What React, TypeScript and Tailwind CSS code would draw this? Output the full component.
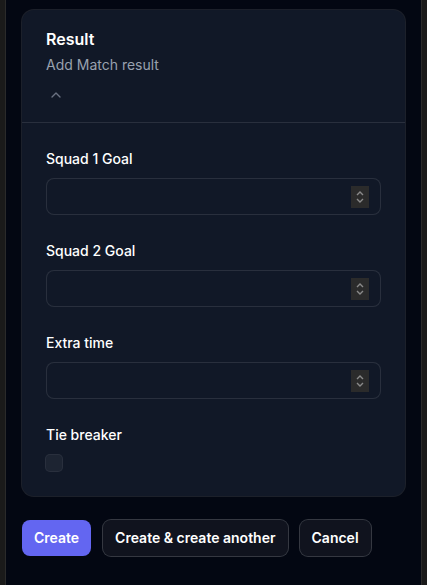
import { ChevronUp } from "lucide-react";

type FieldProps = {
    label: string
}

const NumberField = ({ label }: FieldProps) => {
    return (
        <div className="flex flex-col">
            <label className="text-sm leading-5 font-medium text-white mb-[9px]">{label}</label>
            <div className="h-[37px] rounded-lg ring-1 ring-white/10 ring-inset flex items-center justify-end pr-3">
                <div className="w-[18px] h-[22px] bg-[#2b2b2b] flex flex-col items-center justify-center">
                    <svg width="10" height="16" viewBox="0 0 10 16" fill="none" stroke="#8a8a8a" strokeWidth="1.4">
                        <path d="M2 6 L5 3 L8 6" />
                        <path d="M2 10 L5 13 L8 10" />
                    </svg>
                </div>
            </div>
        </div>
    );
}

const App = () => {
    return (
        <div className="min-h-[585px] w-full flex bg-[#030712]" style={{ fontFamily: "Inter, 'Liberation Sans', sans-serif" }}>
            <div className="w-[6px] bg-[#1a1a1a] border-r border-[#2a2a2a]" />
            <main className="flex-1 pt-[10px] px-[16px]">
                <section className="rounded-xl bg-[#111827] ring-1 ring-white/10">
                    <header className="px-6 pt-[17px] pb-[17px]">
                        <h2 className="text-base leading-6 font-semibold text-white">Result</h2>
                        <p className="mt-1 text-sm leading-5 text-gray-400">Add Match result</p>
                        <button className="mt-[10px] size-5 flex items-center justify-center text-gray-500">
                            <ChevronUp className="size-4" strokeWidth={2} />
                        </button>
                    </header>
                    <div className="border-t border-white/10 px-6 pt-[26px] pb-[25px] flex flex-col gap-[26px]">
                        <NumberField label="Squad 1 Goal" />
                        <NumberField label="Squad 2 Goal" />
                        <NumberField label="Extra time" />
                        <div className="flex flex-col">
                            <label className="text-sm leading-5 font-medium text-white mb-[10px]">Tie breaker</label>
                            <div className="size-4 rounded bg-white/5 ring-1 ring-white/10" />
                        </div>
                    </div>
                </section>
                <div className="mt-6 flex gap-3">
                    <button className="px-3 py-2 rounded-lg bg-[#6366f1] text-sm leading-5 font-semibold text-white">Create</button>
                    <button className="px-3 py-2 rounded-lg bg-white/5 ring-1 ring-white/20 text-sm leading-5 font-semibold text-white">Create &amp; create another</button>
                    <button className="px-3 py-2 rounded-lg bg-white/5 ring-1 ring-white/20 text-sm leading-5 font-semibold text-white">Cancel</button>
                </div>
            </main>
            <div className="w-[6px] bg-[#1a1a1a] border-l border-[#2a2a2a]" />
        </div>
    );
}

export default App
